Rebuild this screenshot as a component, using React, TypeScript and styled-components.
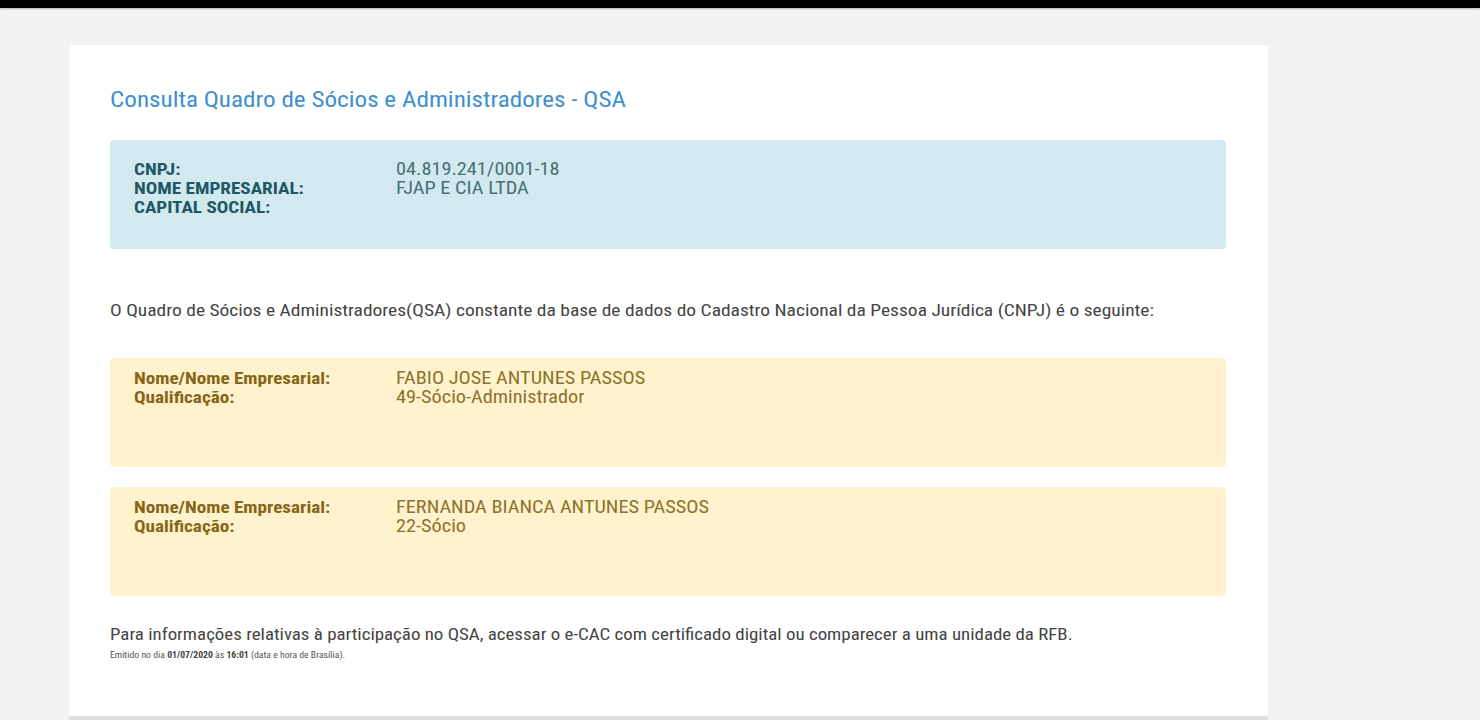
import React from "react";
import styled, { createGlobalStyle } from "styled-components";

const GlobalStyle = createGlobalStyle`
  html, body { margin: 0; padding: 0; }
  body {
    background: #f2f2f2;
    font-family: "Roboto Condensed", "Liberation Sans Narrow", Roboto, sans-serif;
    color: #444;
  }
`;

const TopBar = styled.div`
  height: 8px;
  background: #000;
  box-shadow: 0 1px 2px rgba(0,0,0,0.25);
`;

const Page = styled.div`
  padding: 37px 0 0 69px;
`;

const Card = styled.div`
  width: 1199px;
  height: 675px;
  box-sizing: border-box;
  background: #fff;
  padding: 43px 42px 0 41px;
  border-bottom: 4px solid #dedede;
  display: flex;
  flex-direction: column;
`;

/* the captured page is rendered slightly widened */
const Wide = styled.span`
  display: inline-block;
  white-space: nowrap;
  transform: scaleX(1.16);
  transform-origin: 0 50%;
`;

const Title = styled.h1`
  margin: 0;
  font-size: 21.7px;
  line-height: 24px;
  font-weight: 400;
  color: #3f8fcf;
`;

const Alert = styled.div<{ $tone: "info" | "warning"; $top: number }>`
  margin-top: ${(p) => p.$top}px;
  height: 109px;
  box-sizing: border-box;
  border-radius: 4px;
  padding: ${(p) => (p.$tone === "info" ? "20px" : "11px")} 24px 0 24px;
  background: ${(p) => (p.$tone === "info" ? "#d1e9ef" : "#fff2cc")};
  display: grid;
  grid-template-columns: 262px 1fr;
  align-content: start;
  line-height: 19px;
`;

const Label = styled.div<{ $tone: "info" | "warning" }>`
  font-size: 16.5px;
  font-weight: 700;
  color: ${(p) => (p.$tone === "info" ? "#1d5864" : "#86661a")};
`;

const Value = styled.div<{ $tone: "info" | "warning" }>`
  font-size: 17.5px;
  color: ${(p) => (p.$tone === "info" ? "#4b6f77" : "#8c7230")};
`;

const Text = styled.p<{ $top: number; $size: number }>`
  margin: ${(p) => p.$top}px 0 0;
  font-size: ${(p) => p.$size}px;
  line-height: 21px;
  color: #444;
`;

const Small = styled.p`
  margin: 4px 0 0;
  font-size: 8.4px;
  line-height: 13px;
  color: #555;
  b { font-weight: 700; color: #444; }
`;

type Row = [string, string];

const InfoBox = ({ tone, top, rows }: { tone: "info" | "warning"; top: number; rows: Row[] }) => (
  <Alert $tone={tone} $top={top}>
    {rows.map(([l, v]) => (
      <React.Fragment key={l}>
        <Label $tone={tone}>
          <Wide>{l}</Wide>
        </Label>
        <Value $tone={tone}>
          <Wide>{v}</Wide>
        </Value>
      </React.Fragment>
    ))}
  </Alert>
);

export default function App() {
  return (
    <>
      <GlobalStyle />
      <TopBar />
      <Page>
        <Card>
          <Title>
            <Wide>Consulta Quadro de Sócios e Administradores - QSA</Wide>
          </Title>
          <InfoBox
            tone="info"
            top={28}
            rows={[
              ["CNPJ:", "04.819.241/0001-18"],
              ["NOME EMPRESARIAL:", "FJAP E CIA LTDA"],
              ["CAPITAL SOCIAL:", ""],
            ]}
          />
          <Text $top={51} $size={16.8}>
            <Wide>
              O Quadro de Sócios e Administradores(QSA) constante da base de dados do Cadastro Nacional da Pessoa Jurídica (CNPJ) é o seguinte:
            </Wide>
          </Text>
          <InfoBox
            tone="warning"
            top={37}
            rows={[
              ["Nome/Nome Empresarial:", "FABIO JOSE ANTUNES PASSOS"],
              ["Qualificação:", "49-Sócio-Administrador"],
            ]}
          />
          <InfoBox
            tone="warning"
            top={20}
            rows={[
              ["Nome/Nome Empresarial:", "FERNANDA BIANCA ANTUNES PASSOS"],
              ["Qualificação:", "22-Sócio"],
            ]}
          />
          <Text $top={28} $size={16.3}>
            <Wide>
              Para informações relativas à participação no QSA, acessar o e-CAC com certificado digital ou comparecer a uma unidade da RFB.
            </Wide>
          </Text>
          <Small>
            <Wide>
              Emitido no dia <b>01/07/2020</b> às <b>16:01</b> (data e hora de Brasília).
            </Wide>
          </Small>
        </Card>
      </Page>
    </>
  );
}
